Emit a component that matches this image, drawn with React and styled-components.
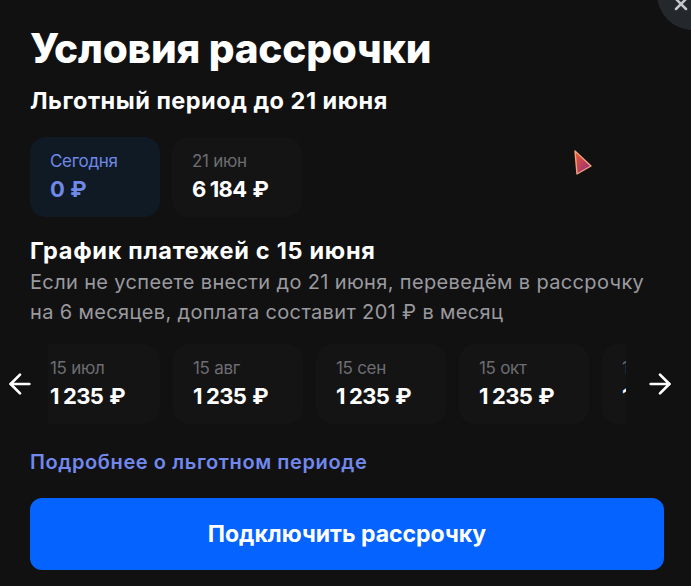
import React from 'react';
import styled, { createGlobalStyle } from 'styled-components';
import { ArrowLeft, ArrowRight, X } from 'lucide-react';

const GlobalStyle = createGlobalStyle`
  body {
    margin: 0;
    background: #111112;
    font-family: Inter, "Noto Sans", sans-serif;
    color: #fff;
  }
`;

const Sheet = styled.div`
  position: relative;
  height: 586px;
  overflow: hidden;
  padding: 0 27px 0 30px;
  box-sizing: border-box;
  background: #111112;
`;

const CloseButton = styled.button`
  position: absolute;
  top: -42px;
  left: 657px;
  width: 72px;
  height: 72px;
  border-radius: 50%;
  border: none;
  background: #24272c;
  color: #c4c8cc;
  display: flex;
  align-items: flex-end;
  justify-content: flex-start;
  padding: 0 0 16px 14px;
`;

const Title = styled.h1`
  margin: 0;
  padding-top: 24px;
  font-size: 40.5px;
  line-height: 50px;
  font-weight: 800;
  letter-spacing: -0.2px;
`;

const Subtitle = styled.h2`
  margin: 14px 0 0;
  font-size: 23.5px;
  line-height: 26px;
  font-weight: 700;
  letter-spacing: 0.5px;
`;

const SectionTitle = styled(Subtitle)`
  margin: 0;
  letter-spacing: 0.7px;
`;

const Row = styled.div`
  display: flex;
  gap: 12px;
`;

const TopRow = styled(Row)`
  margin-top: 23px;
`;

const Card = styled.div`
  flex: 0 0 130px;
  height: 80px;
  box-sizing: border-box;
  padding: 13px 20px;
  border-radius: 16px;
  background: ${(p) => (p.$active ? '#0f1a25' : '#141415')};
`;

const Label = styled.div`
  font-size: 17px;
  line-height: 22px;
  color: ${(p) => (p.$active ? '#7089e8' : '#6d6d72')};
  letter-spacing: -0.3px;
`;

const Amount = styled.div`
  margin-top: 4px;
  font-size: 22px;
  line-height: 26px;
  font-weight: 700;
  color: ${(p) => (p.$active ? '#7089e8' : '#fff')};
  letter-spacing: -0.6px;
  white-space: nowrap;
`;

// gap between digit groups and before the currency sign
const Gap = styled.span`
  display: inline-block;
  width: ${(p) => p.$w}px;
`;

const Section = styled.div`
  margin-top: 21px;
`;

const Note = styled.p`
  margin: 3px 0 0;
  font-size: 20px;
  line-height: 30px;
  color: #9a9a9f;
  letter-spacing: 0.35px;
`;

const Carousel = styled.div`
  position: relative;
  margin: 17px -27px 0 -30px;
  padding-left: 30px;
  overflow: hidden;
`;

const Track = styled(Row)`
  gap: 13px;
`;

const Fade = styled.div`
  position: absolute;
  top: 0;
  bottom: 0;
  ${(p) => (p.$side === 'left' ? 'left: 0; width: 48px;' : 'right: 0; width: 65px;')}
  background: #111112;
  display: flex;
  align-items: center;
  justify-content: ${(p) => (p.$side === 'left' ? 'flex-start' : 'flex-end')};
  padding: ${(p) => (p.$side === 'left' ? '0 0 0 4px' : '0 15px 0 0')};
  box-sizing: border-box;
  color: #fff;
`;

const MoreLink = styled.a`
  display: block;
  margin-top: 25px;
  font-size: 20px;
  line-height: 26px;
  font-weight: 600;
  color: #7188ec;
  text-decoration: none;
  letter-spacing: 0.6px;
`;

const PrimaryButton = styled.button`
  display: block;
  width: 100%;
  height: 72px;
  margin-top: 23px;
  border: none;
  border-radius: 12px;
  background: #0564ff;
  color: #fff;
  font-family: inherit;
  font-size: 23px;
  font-weight: 700;
  letter-spacing: 0;
`;

const Pointer = styled.svg`
  position: absolute;
  left: 572px;
  top: 149px;
`;

function Money({ value }) {
  const groups = String(value).replace(/\B(?=(\d{3})+(?!\d))/g, ' ').split(' ');
  return (
    <>
      {groups.map((g, i) => (
        <React.Fragment key={i}>
          {i > 0 && <Gap $w={4} />}
          {g}
        </React.Fragment>
      ))}
      <Gap $w={6} />₽
    </>
  );
}

const schedule = [
  { date: '15 июл', sum: 1235 },
  { date: '15 авг', sum: 1235 },
  { date: '15 сен', sum: 1235 },
  { date: '15 окт', sum: 1235 },
  { date: '15 ноя', sum: 1235 },
];

export default function App() {
  return (
    <>
      <GlobalStyle />
      <Sheet>
        <CloseButton aria-label="Закрыть">
          <X size={20} strokeWidth={3} />
        </CloseButton>

        <Title>Условия рассрочки</Title>
        <Subtitle>Льготный период до 21 июня</Subtitle>

        <TopRow>
          <Card $active>
            <Label $active>Сегодня</Label>
            <Amount $active>
              <Money value={0} />
            </Amount>
          </Card>
          <Card>
            <Label>21 июн</Label>
            <Amount>
              <Money value={6184} />
            </Amount>
          </Card>
        </TopRow>

        <Section>
          <SectionTitle as="h3">График платежей с 15 июня</SectionTitle>
          <Note>
            Если не успеете внести до 21 июня, переведём в рассрочку
            <br />
            на 6 месяцев, доплата составит 201 ₽ в месяц
          </Note>
        </Section>

        <Carousel>
          <Track>
            {schedule.map((item) => (
              <Card key={item.date}>
                <Label>{item.date}</Label>
                <Amount>
                  <Money value={item.sum} />
                </Amount>
              </Card>
            ))}
          </Track>
          <Fade $side="left">
            <ArrowLeft size={32} strokeWidth={2} />
          </Fade>
          <Fade $side="right">
            <ArrowRight size={32} strokeWidth={2} />
          </Fade>
        </Carousel>

        <MoreLink href="#">Подробнее о льготном периоде</MoreLink>
        <PrimaryButton>Подключить рассрочку</PrimaryButton>

        <Pointer width="22" height="28" viewBox="0 0 22 28">
          <defs>
            <linearGradient id="ptr" x1="0" y1="0" x2="1" y2="1">
              <stop offset="0" stopColor="#f05a28" />
              <stop offset="1" stopColor="#8a2a8c" />
            </linearGradient>
          </defs>
          <path
            d="M3 2 L19 17 L5 25 Z"
            fill="url(#ptr)"
            stroke="#f3a37a"
            strokeWidth="1.4"
            strokeLinejoin="round"
          />
        </Pointer>
      </Sheet>
    </>
  );
}
